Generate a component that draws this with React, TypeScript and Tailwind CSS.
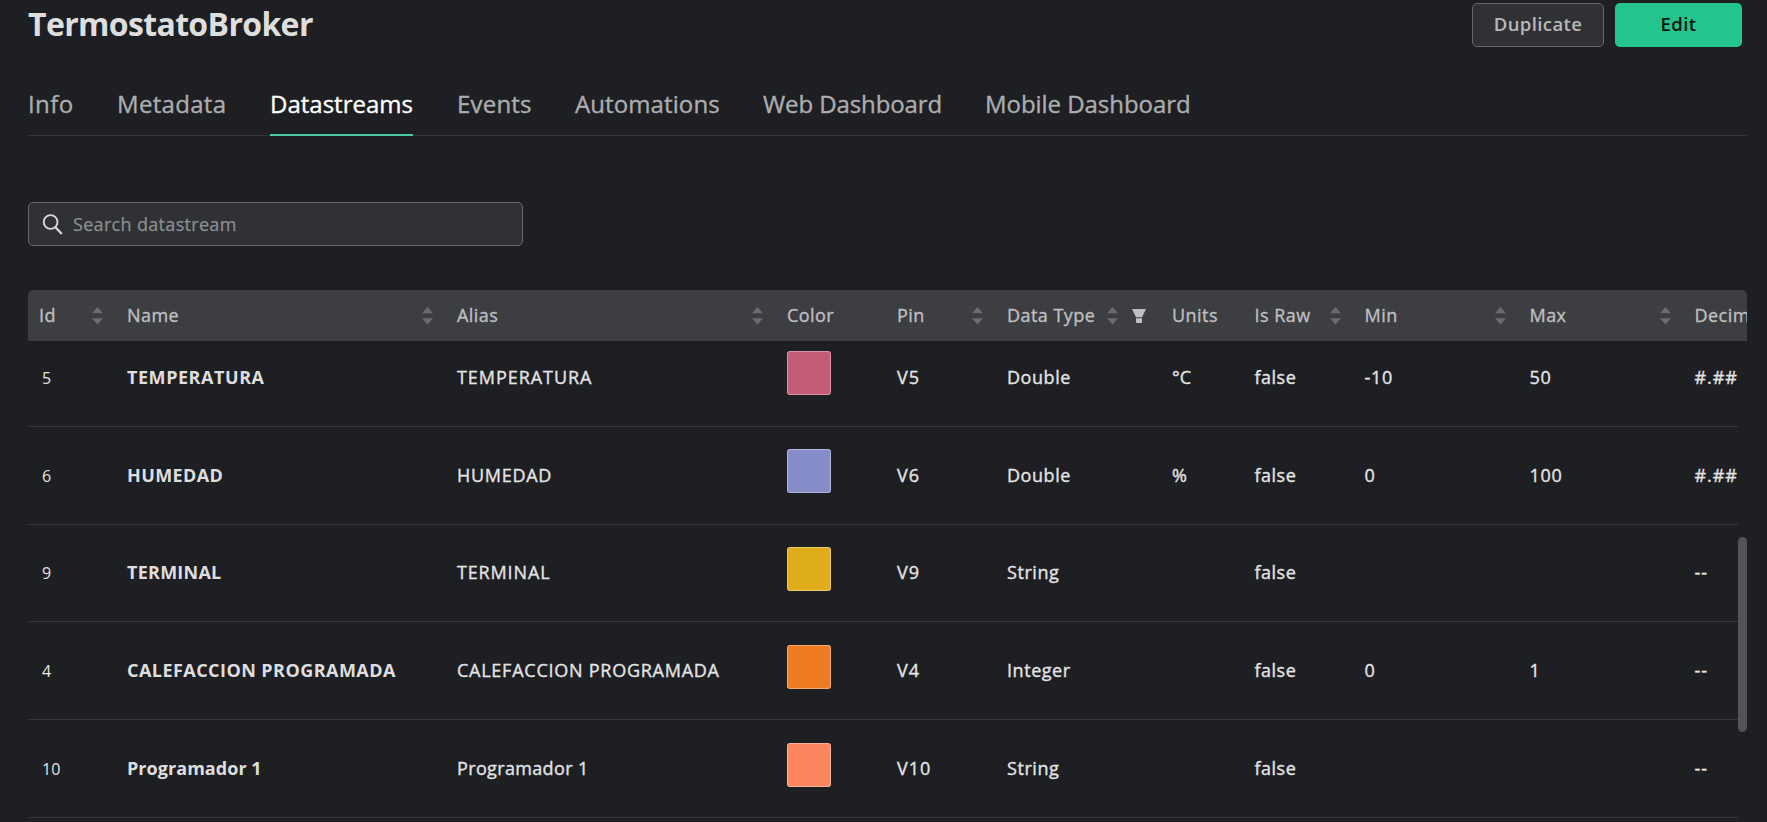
import clsx from "clsx";

type Tab = { label: string; width: string; active?: boolean };

const tabs: Tab[] = [
  { label: "Info", width: "w-[45px] tracking-[0.4px]" },
  { label: "Metadata", width: "w-[109px] tracking-[0.3px]" },
  { label: "Datastreams", width: "w-[143px] tracking-[0px]", active: true },
  { label: "Events", width: "w-[74px] tracking-[0.2px]" },
  { label: "Automations", width: "w-[144px] tracking-[0.1px]" },
  { label: "Web Dashboard", width: "w-[178px] tracking-[-0.1px]" },
  { label: "Mobile Dashboard", width: "w-[204px] tracking-[-0.05px]" },
];

type Column = { label: string; sortable?: boolean; filter?: boolean };

const columns: Column[] = [
  { label: "Id", sortable: true },
  { label: "Name", sortable: true },
  { label: "Alias", sortable: true },
  { label: "Color" },
  { label: "Pin", sortable: true },
  { label: "Data Type", sortable: true, filter: true },
  { label: "Units" },
  { label: "Is Raw", sortable: true },
  { label: "Min", sortable: true },
  { label: "Max", sortable: true },
  { label: "Decimals" },
];

type Row = {
  id: string;
  name: string;
  nameTracking: string;
  aliasTracking: string;
  color: string;
  pin: string;
  type: string;
  units: string;
  min: string;
  max: string;
  decimals: string;
};

const rows: Row[] = [
  { id: "5", name: "TEMPERATURA", nameTracking: "tracking-[0.55px]", aliasTracking: "tracking-[0.95px]", color: "bg-[#c25b75]", pin: "V5", type: "Double", units: "°C", min: "-10", max: "50", decimals: "#.##" },
  { id: "6", name: "HUMEDAD", nameTracking: "tracking-[0.4px]", aliasTracking: "tracking-[0.7px]", color: "bg-[#858cc8]", pin: "V6", type: "Double", units: "%", min: "0", max: "100", decimals: "#.##" },
  { id: "9", name: "TERMINAL", nameTracking: "tracking-[0.25px]", aliasTracking: "tracking-[0.85px]", color: "bg-[#dfad1b]", pin: "V9", type: "String", units: "", min: "", max: "", decimals: "--" },
  { id: "4", name: "CALEFACCION PROGRAMADA", nameTracking: "tracking-[0.45px]", aliasTracking: "tracking-[0.75px]", color: "bg-[#ed7c23]", pin: "V4", type: "Integer", units: "", min: "0", max: "1", decimals: "--" },
  { id: "10", name: "Programador 1", nameTracking: "tracking-[0.05px]", aliasTracking: "tracking-[0.35px]", color: "bg-[#fb8660]", pin: "V10", type: "String", units: "", min: "", max: "", decimals: "--" },
];

const grid =
  "grid w-[1770px] grid-cols-[88px_330px_330px_110px_110px_165px_82.5px_110px_165px_165px_115px]";

function Sorter() {
  return (
    <svg width="11" height="18" viewBox="0 0 11 18" className="shrink-0 fill-[#6b6c70]">
      <path d="M5.5 0 11 6.3H0zM5.5 17.6 0 11.3h11z" />
    </svg>
  );
}

function FilterIcon() {
  return (
    <svg width="14" height="14" viewBox="0 0 14 14" className="shrink-0 fill-[#bfbfc1]">
      <path d="M0 0h14l-4 8.2H4zM4 9.3h6V13.2a.8.8 0 0 1-.8.8H4.8a.8.8 0 0 1-.8-.8z" />
    </svg>
  );
}

function SearchIcon() {
  return (
    <svg width="21" height="21" viewBox="0 0 21 21" fill="none" stroke="#d8d8d8" strokeWidth="1.9" className="shrink-0">
      <circle cx="8.6" cy="8" r="6.9" />
      <path d="M13.2 13 19.8 20" strokeWidth="2.2" />
    </svg>
  );
}

function HeaderCell({ label, sortable, filter }: Column) {
  return (
    <div className={clsx("flex items-center justify-between pl-[11px]", filter ? "pr-[15px]" : "pr-[13px]")}>
      <span className="whitespace-nowrap">{label}</span>
      {filter ? (
        <span className="flex items-center gap-[14px]">
          <Sorter />
          <FilterIcon />
        </span>
      ) : (
        sortable && <Sorter />
      )}
    </div>
  );
}

function DataRow({ row }: { row: Row }) {
  return (
    <div className={clsx(grid, "h-[97.8px] items-center border-b border-[#35363a]")}>
      <div className="pt-px pl-[14px] text-[16px] tracking-[0.2px] [-webkit-text-stroke:0px]">{row.id}</div>
      <div className={clsx("pl-[11px] font-bold whitespace-nowrap text-[#dededf] [-webkit-text-stroke:0px]", row.nameTracking)}>{row.name}</div>
      <div className={clsx("pl-[11px] whitespace-nowrap", row.aliasTracking)}>{row.name}</div>
      <div className="pl-[11px]">
        <div className={clsx("mb-[8px] size-11 rounded-[3px] border border-white/35", row.color)} />
      </div>
      <div className="pl-[11px] tracking-[1px]">{row.pin}</div>
      <div className="pl-[11px] tracking-[0.55px]">{row.type}</div>
      <div className="pl-[11px]">{row.units}</div>
      <div className="pl-[11px] tracking-[0.5px]">false</div>
      <div className="pl-[11px] tracking-[0.7px]">{row.min}</div>
      <div className="pl-[11px] tracking-[0.7px]">{row.max}</div>
      <div className="pl-[11px] tracking-[0.9px]">{row.decimals}</div>
    </div>
  );
}

export default function App() {
  return (
    <div className="flex h-[822px] w-full flex-col overflow-hidden bg-[#1e1f22] pl-7 font-['Open_Sans','Noto_Sans',sans-serif] text-[#e4e4e5]">
      <header className="flex h-[47px] shrink-0 items-start justify-between pt-[3px] pr-[25px]">
        <h1 className="text-[32px] leading-[42px] font-bold tracking-[-0.65px] text-[#dededf]">TermostatoBroker</h1>
        <div className="flex gap-[11px] text-[18.5px] font-semibold tracking-[0.4px]">
          <button className="h-11 w-[132px] rounded-[5px] border border-[#68696d] bg-[#303135] pb-[2px] text-[#b8b8ba]">Duplicate</button>
          <button className="h-11 w-[127px] rounded-[5px] bg-[#24c48e] pb-[2px] text-[#08140f]">Edit</button>
        </div>
      </header>

      <nav className="mt-[27px] mr-5 flex h-[62px] shrink-0 gap-11 border-b border-[#35363a] text-[24px] [-webkit-text-stroke:0.35px]">
        {tabs.map((tab) => (
          <div
            key={tab.label}
            className={clsx(
              "-mb-px h-[62px] whitespace-nowrap border-b-2 leading-[59px]",
              tab.width,
              tab.active ? "border-[#4fc7a0] text-white" : "border-transparent text-[#acadaf]",
            )}
          >
            {tab.label}
          </div>
        ))}
      </nav>

      <div className="mt-[66px] flex h-11 w-[495px] shrink-0 items-center gap-[10px] rounded-[5px] border border-[#68696d] bg-[#303135] pl-[13px]">
        <SearchIcon />
        <span className="text-[18px] tracking-[0.32px] text-[#8d8e91] [-webkit-text-stroke:0.25px]">Search datastream</span>
      </div>

      <section className="mt-11 mr-5 flex min-h-0 flex-1 flex-col overflow-hidden text-[18px] [-webkit-text-stroke:0.35px]">
        <div className="h-[51px] shrink-0 overflow-hidden rounded-t-[5px] bg-[#3d3e42] text-[#bfbfc1]">
          <div className={clsx(grid, "h-full items-center tracking-[0.45px]")}>
            {columns.map((column) => (
              <HeaderCell key={column.label} {...column} />
            ))}
          </div>
        </div>
        <div className="flex min-h-0 flex-1">
          <div className="min-w-0 flex-1 overflow-hidden">
            <div className="-mt-[12px]">
              {rows.map((row) => (
                <DataRow key={row.id} row={row} />
              ))}
            </div>
          </div>
          <div className="w-[9px] pt-[196px]">
            <div className="h-[195px] rounded-full bg-[#535357]" />
          </div>
        </div>
      </section>
    </div>
  );
}
